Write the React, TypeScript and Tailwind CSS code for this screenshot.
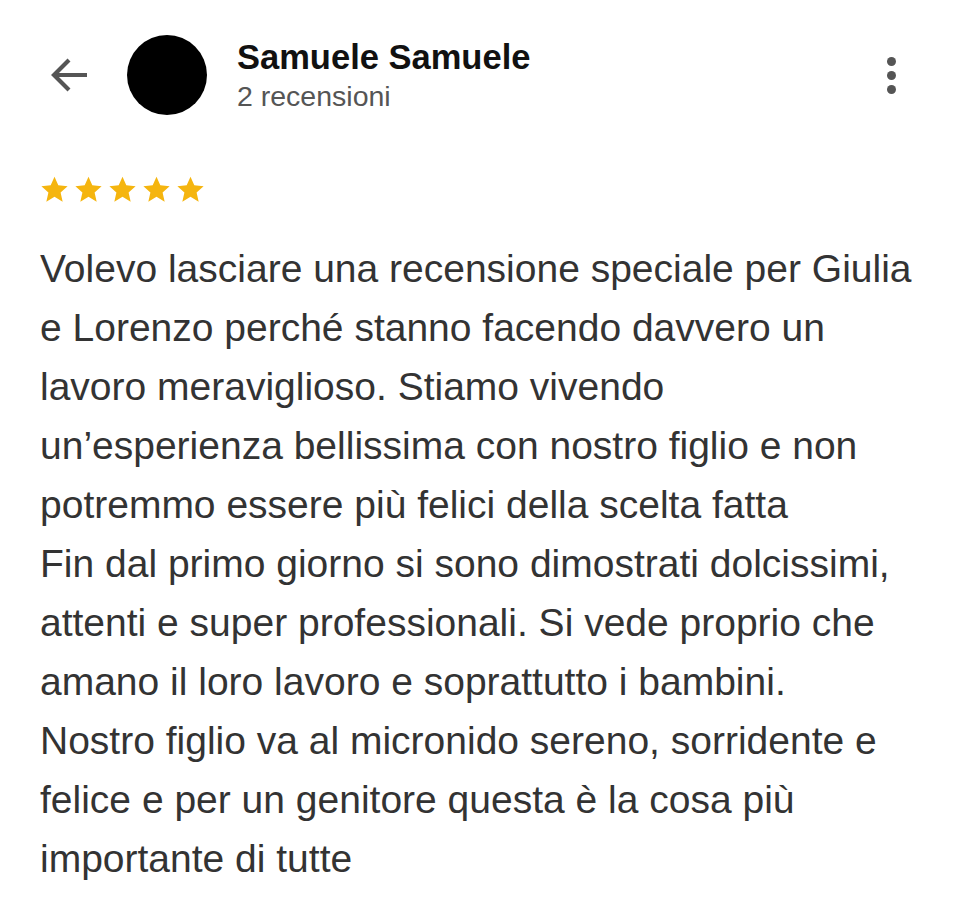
import React from 'react';

const lines = [
  'Volevo lasciare una recensione speciale per Giulia',
  'e Lorenzo perché stanno facendo davvero un',
  'lavoro meraviglioso. Stiamo vivendo',
  'un’esperienza bellissima con nostro figlio e non',
  'potremmo essere più felici della scelta fatta',
  'Fin dal primo giorno si sono dimostrati dolcissimi,',
  'attenti e super professionali. Si vede proprio che',
  'amano il loro lavoro e soprattutto i bambini.',
  'Nostro figlio va al micronido sereno, sorridente e',
  'felice e per un genitore questa è la cosa più',
  'importante di tutte',
];

function Star() {
  return (
    <svg viewBox="0 0 24 24" className="w-[31px] h-[31px]">
      <path
        d="M12 2.2l2.95 6.6 7.2.7-5.43 4.8 1.6 7.1L12 17.7l-6.32 3.7 1.6-7.1L1.85 9.5l7.2-.7z"
        fill="#f5b50f"
      />
    </svg>
  );
}

export default function App() {
  return (
    <div
      className="w-[960px] h-[909px] bg-white overflow-hidden"
      style={{ fontFamily: '"Liberation Sans", Arial, Helvetica, sans-serif' }}
    >
      <div className="flex items-start pt-[35px] pl-[48px] pr-[64px]">
        <svg viewBox="0 0 40 40" className="w-[42px] h-[40px] shrink-0 mt-[20px]">
          <path
            d="M38 20H6M20 5L5 20l15 15"
            fill="none"
            stroke="#555"
            strokeWidth="4.2"
          />
        </svg>
        <div className="w-[80px] h-[80px] rounded-full bg-black ml-[37px] shrink-0" />
        <div className="ml-[30px] flex-1 mt-[2px]">
          <div className="text-[34.5px] leading-[40px] font-bold text-[#111]">
            Samuele Samuele
          </div>
          <div className="text-[28.5px] leading-[32px] text-[#555] mt-[3px]">2 recensioni</div>
        </div>
        <div className="flex flex-col gap-[5px] items-center mt-[22px]">
          <div className="w-[9px] h-[9px] rounded-full bg-[#555]" />
          <div className="w-[9px] h-[9px] rounded-full bg-[#555]" />
          <div className="w-[9px] h-[9px] rounded-full bg-[#555]" />
        </div>
      </div>

      <div className="flex gap-[3px] pl-[39px] mt-[59px]">
        <Star />
        <Star />
        <Star />
        <Star />
        <Star />
      </div>

      <div className="pl-[40px] mt-[34px] text-[39px] leading-[59px] text-[#333]">
        {lines.map((l, i) => (
          <div key={i} className="whitespace-nowrap">
            {l}
          </div>
        ))}
      </div>
    </div>
  );
}
